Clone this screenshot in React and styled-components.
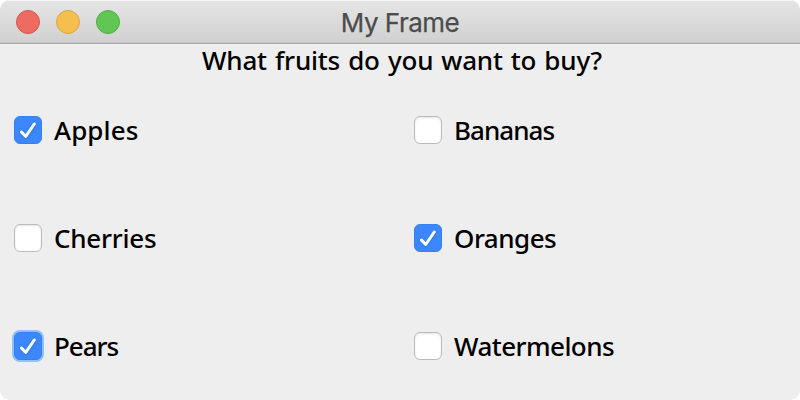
import React from 'react';
import styled, { createGlobalStyle } from 'styled-components';

const Global = createGlobalStyle`
  * { box-sizing: border-box; }
  body { margin: 0; background: #fff; }
`;
const Frame = styled.main`
  width: 800px; height: 400px; overflow: hidden;
  display: flex; flex-direction: column;
  background: #eee; border-radius: 10px; color: #000;
  font: 500 26px/32px "Noto Sans", sans-serif;
`;
const TitleBar = styled.header`
  height: 44px; flex: none;
  display: grid; grid-template-columns: 140px 1fr 140px; align-items: center;
  background: linear-gradient(#e6e6e6, #d0d0d0);
  border-bottom: 1px solid #a9a9a9;
  box-shadow: inset 0 1px #f6f6f6, inset 0 -1px #c4c4c4;
`;
const Controls = styled.div`
  display: flex; gap: 16px; padding: 1px 0 0 16px;
`;
const Light = styled.span`
  width: 24px; height: 24px; border-radius: 50%;
  background: ${p => p.$fill}; border: 1px solid ${p => p.$edge};
`;
const Title = styled.h1`
  margin: 0; padding-top: 2px; text-align: center; color: #4c4c4c;
  font: 400 26px/32px Inter, sans-serif;
  letter-spacing: -0.5px;
  -webkit-text-stroke: 0.25px #4c4c4c;
`;
const Question = styled.div`
  height: 32px; padding-left: 202px; white-space: nowrap;
  letter-spacing: -0.18px; word-spacing: 1.5px;
`;
const Options = styled.section`
  flex: 1; display: grid; grid-template: repeat(3, 108px) / 1fr 1fr;
`;
const Option = styled.label`
  display: flex; align-items: center; gap: 12px; padding-left: 14px;
`;
const Box = styled.span`
  width: 28px; height: 28px; border-radius: 6px; flex: none;
  background: ${p => p.$on ? '#3b87fb' : '#fff'};
  border: 1px solid ${p => p.$on ? '#3580f5' : '#bcbcbc'};
  box-shadow: ${p => p.$focus ? '0 0 0 2px #8fc0f8' : p.$on ? 'none' : 'inset 0 1px 2px #e2e2e2'};
`;
const Tick = styled.svg`
  display: block; width: 26px; height: 26px;
  fill: none; stroke: #fff; stroke-width: 3;
  stroke-linecap: round; stroke-linejoin: round;
  filter: drop-shadow(0 1px 1px #2368ca80);
`;
const Name = styled.span`
  letter-spacing: ${p => p.$tracking}px;
`;
const items = [
  { name: 'Apples', tracking: 0.1, on: true },
  { name: 'Bananas', tracking: -0.95 },
  { name: 'Cherries', tracking: -0.25 },
  { name: 'Oranges', tracking: -0.5, on: true },
  { name: 'Pears', tracking: -1.05, on: true, focus: true },
  { name: 'Watermelons', tracking: -0.55 },
];
export default function App() {
  return (
    <>
      <Global />
      <Frame>
        <TitleBar>
          <Controls>
            <Light $fill="#ed6b60" $edge="#d9564d" />
            <Light $fill="#f5bf50" $edge="#dca544" />
            <Light $fill="#62c655" $edge="#53ae45" />
          </Controls>
          <Title>My Frame</Title>
        </TitleBar>
        <Question>What fruits do you want to buy?</Question>
        <Options>
          {items.map(item => (
            <Option key={item.name}>
              <Box $on={item.on} $focus={item.focus}>
                {item.on && <Tick viewBox="0 0 26 26"><path d="M6.5 15.1 10.7 19.5 19.3 7" /></Tick>}
              </Box>
              <Name $tracking={item.tracking}>{item.name}</Name>
            </Option>
          ))}
        </Options>
      </Frame>
    </>
  );
}
